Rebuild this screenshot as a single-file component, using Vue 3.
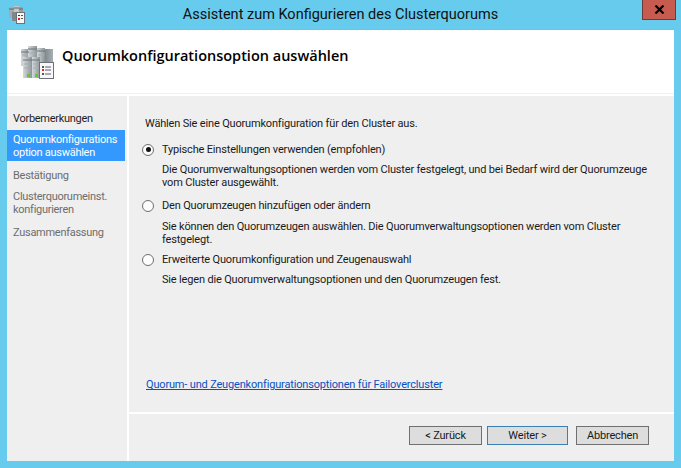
<script setup>
const steps = [
  { id: 1, label: 'Vorbemerkungen', cls: 'done' },
  { id: 2, label: 'Quorumkonfigurations\noption auswählen', cls: 'active' },
  { id: 3, label: 'Bestätigung', cls: 'todo' },
  { id: 4, label: 'Clusterquorumeinst.\nkonfigurieren', cls: 'todo' },
  { id: 5, label: 'Zusammenfassung', cls: 'todo' },
]
const options = [
  { id: 1, label: 'Typische Einstellungen verwenden (empfohlen)', on: true, text: 'Die Quorumverwaltungsoptionen werden vom Cluster festgelegt, und bei Bedarf wird der Quorumzeuge\nvom Cluster ausgewählt.' },
  { id: 2, label: 'Den Quorumzeugen hinzufügen oder ändern', on: false, text: 'Sie können den Quorumzeugen auswählen. Die Quorumverwaltungsoptionen werden vom Cluster\nfestgelegt.' },
  { id: 3, label: 'Erweiterte Quorumkonfiguration und Zeugenauswahl', on: false, text: 'Sie legen die Quorumverwaltungsoptionen und den Quorumzeugen fest.' },
]
</script>

<template>
  <div class="window">
    <div class="titlebar">
      <svg class="appicon" width="24" height="24" viewBox="0 0 24 24">
        <rect x="3" y="4" width="5" height="11" fill="#a3abaf" />
        <rect x="8" y="3" width="5" height="10" fill="#c3c8cb" />
        <rect x="13" y="4" width="4" height="8" fill="#98a1a6" />
        <path d="M3 6 H8 M8 5 H13 M13 6 H17" stroke="#5f686d" stroke-width="1" />
        <rect x="6" y="9" width="5" height="9" fill="#7f888d" />
        <rect x="6" y="16" width="1" height="1" fill="#5cc23c" />
        <rect x="10.5" y="9.5" width="8" height="11" fill="#f7f7f7" stroke="#6d7276" stroke-width="1" />
        <rect x="12" y="12" width="2" height="1" fill="#333" />
        <rect x="12" y="15" width="2" height="2" fill="#d22" />
        <rect x="15" y="12" width="2" height="1" fill="#555" />
        <rect x="15" y="15" width="2" height="1" fill="#555" />
      </svg>
      <div class="title">Assistent zum Konfigurieren des Clusterquorums</div>
      <div class="close">
        <svg width="11" height="9" viewBox="0 0 11 9"><path d="M1.5 0.5 L9.5 8.5 M9.5 0.5 L1.5 8.5" stroke="#000" stroke-width="2.2" fill="none" /></svg>
      </div>
    </div>
    <div class="client">
      <div class="header">
        <svg class="bigicon" width="38" height="38" viewBox="0 0 38 38">
          <defs>
            <linearGradient id="srv" x1="0" y1="0" x2="1" y2="0">
              <stop offset="0" stop-color="#d5d9db" />
              <stop offset="1" stop-color="#8b9498" />
            </linearGradient>
            <linearGradient id="side" x1="0" y1="0" x2="1" y2="0">
              <stop offset="0" stop-color="#7c8488" />
              <stop offset="1" stop-color="#a9afb2" />
            </linearGradient>
          </defs>
          <rect x="26" y="6" width="9" height="15" fill="url(#side)" />
          <rect x="3" y="6" width="8" height="17" fill="url(#srv)" />
          <rect x="19" y="5" width="8" height="14" fill="url(#srv)" />
          <rect x="10" y="3" width="9" height="16" fill="url(#srv)" />
          <path d="M3 9 H11 M10 6 H19 M19 8 H27" stroke="#6b7478" stroke-width="1" />
          <path d="M4 12 H10 M11 10 H18 M20 12 H26" stroke="#a5adb1" stroke-width="1" />
          <rect x="5" y="14" width="9" height="21" fill="url(#srv)" />
          <rect x="14" y="14" width="8" height="21" fill="url(#srv)" />
          <path d="M5 17 H14 M14 17 H22" stroke="#6b7478" stroke-width="1" />
          <path d="M6 21 H13 M15 21 H21 M6 25 H13 M15 25 H21" stroke="#a5adb1" stroke-width="1" />
          <rect x="9" y="31" width="3" height="3" fill="#63c733" />
          <rect x="17" y="31" width="3" height="3" fill="#63c733" />
          <rect x="21.5" y="19.5" width="14" height="16" fill="#f7f7f7" stroke="#6d7276" stroke-width="1" />
          <rect x="24" y="23" width="2" height="2" fill="#555" />
          <rect x="24" y="26" width="2" height="2" fill="#d5262c" />
          <rect x="24" y="30" width="2" height="2" fill="#555" />
          <path d="M27 24 H33 M27 27 H33 M27 31 H33" stroke="#5b5b78" stroke-width="1" />
        </svg>
        <h1>Quorumkonfigurationsoption auswählen</h1>
      </div>
      <div class="body">
        <nav class="side">
          <div v-for="s in steps" :key="s.id" class="step" :class="s.cls">{{ s.label }}</div>
        </nav>
        <div class="main">
          <div class="content">
            <p class="intro">Wählen Sie eine Quorumkonfiguration für den Cluster aus.</p>
            <div v-for="o in options" :key="o.id" class="option">
              <div class="radio-row">
                <span class="radio"><span v-if="o.on" class="dot"></span></span>
                <span>{{ o.label }}</span>
              </div>
              <p class="desc">{{ o.text }}</p>
            </div>
            <a class="link">Quorum- und Zeugenkonfigurationsoptionen für Failovercluster</a>
          </div>
          <div class="footer">
            <button class="btn back">&lt; Zurück</button>
            <button class="btn next">Weiter &gt;</button>
            <button class="btn cancel">Abbrechen</button>
          </div>
        </div>
      </div>
    </div>
  </div>
</template>

<style>
html, body { margin: 0; padding: 0; }
</style>

<style scoped>
.window {
  width: 681px;
  height: 468px;
  box-sizing: border-box;
  background: #66cbec;
  padding: 0 7px 7px;
  display: flex;
  flex-direction: column;
  font-family: Roboto, "Open Sans", sans-serif;
  font-size: 11px;
  letter-spacing: -0.17px;
  color: #1a1a1a;
  overflow: hidden;
}
.titlebar {
  height: 30px;
  flex: none;
  display: flex;
  position: relative;
  justify-content: center;
}
.appicon { position: absolute; left: -1px; top: 3px; }
.title {
  font-size: 14.5px;
  letter-spacing: 0;
  line-height: 30px;
  color: #111;
}
.close {
  position: absolute;
  right: -2px;
  top: 0;
  width: 34px;
  height: 20px;
  box-sizing: border-box;
  background: #c75b50;
  border: 1px solid #6f3a3a;
  border-top: 0;
  display: flex;
  align-items: center;
  justify-content: center;
}
.client {
  flex: 1;
  display: flex;
  flex-direction: column;
  background: #fff;
  box-shadow: 0 -1px 0 #8fb9c8;
  min-height: 0;
}
.header {
  height: 64px;
  margin-bottom: 2px;
  border-bottom: 1px solid #f0f0f0;
  flex: none;
  display: flex;
  align-items: flex-start;
  box-sizing: border-box;
  padding: 13px 0 0 11px;
}
.bigicon { flex: none; }
h1 {
  margin: 3px 0 0 6px;
  font-family: "Open Sans", sans-serif;
  font-size: 14.5px;
  letter-spacing: 0;
  line-height: 19px;
  font-weight: 600;
  color: #000;
}
.body { flex: 1; display: flex; gap: 2px; min-height: 0; }
.side {
  width: 120px;
  flex: none;
  background: #efefef;
  padding: 16px 2px 0 0;
  box-sizing: border-box;
  letter-spacing: -0.28px;
}
.step {
  white-space: pre-line;
  padding: 0 6px;
  line-height: 13px;
}
.step.done { color: #1f1f1f; margin-bottom: 5px; }
.step.active {
  background: #3399ff;
  color: #fff;
  height: 31px;
  padding-top: 3px;
  box-sizing: border-box;
  margin-bottom: 8px;
}
.step.todo { color: #6d6d6d; margin-bottom: 8px; }
.step:last-child { margin-top: 10px; }
.main {
  flex: 1;
  display: flex;
  flex-direction: column;
  gap: 2px;
  min-width: 0;
}
.content {
  flex: 1;
  background: #efefef;
  padding: 20px 16px 0;
  position: relative;
  min-height: 0;
  display: flex;
  flex-direction: column;
}
.intro { margin: 0 0 11px; line-height: 15px; }
.option { margin-bottom: 9px; }
.option:nth-child(3) { margin-bottom: 6px; }
.option:nth-child(3) .desc { margin-top: 7px; }
.radio-row { display: flex; align-items: center; height: 15px; gap: 8px; margin-left: -3px; }
.radio {
  width: 10px;
  height: 10px;
  border: 1px solid #6f6f6f;
  border-radius: 50%;
  background: #fdfdfd;
  display: flex;
  align-items: center;
  justify-content: center;
  flex: none;
}
.dot { width: 5px; height: 5px; border-radius: 50%; background: #111; }
.desc {
  margin: 6px 0 0 17px;
  line-height: 13px;
  white-space: pre;
}
.link {
  margin-top: auto;
  margin-bottom: 20px;
  color: #0a4fc0;
  text-decoration: underline;
  line-height: 15px;
  margin-left: 1px;
}
.footer {
  height: 47px;
  flex: none;
  background: #efefef;
  display: flex;
  align-items: flex-start;
  padding: 12px 25px 0 0;
  box-sizing: border-box;
  justify-content: flex-end;
}
.btn {
  height: 19px;
  box-sizing: border-box;
  background: #dddddd;
  border: 1px solid #707070;
  font: inherit;
  letter-spacing: inherit;
  color: #1a1a1a;
  padding: 0;
  line-height: 15px;
}
.back { width: 73px; margin-right: 5px; }
.next { width: 81px; margin-right: 8px; border-color: #3c7fb1; }
.cancel { width: 73px; }
</style>
